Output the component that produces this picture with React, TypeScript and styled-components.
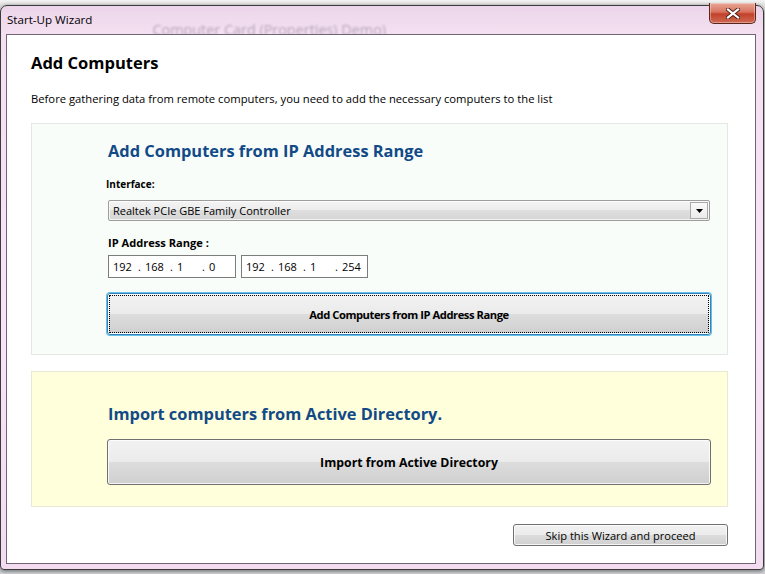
import styled, { createGlobalStyle } from "styled-components";

const GlobalStyle = createGlobalStyle`
    html, body {
        margin: 0;
        padding: 0;
    }
    body {
        background: #dfe2e6;
        font-family: "Open Sans", "Noto Sans", "Liberation Sans", sans-serif;
        color: #000;
    }
`;

const Desktop = styled.div`
    width: 765px;
    height: 574px;
    box-sizing: border-box;
    padding-top: 5px;
    overflow: hidden;
    background: linear-gradient(180deg, #f3f3f3 0px, #e4e4e4 5px, #d2d4d8 100%);
`;

const Window = styled.div`
    width: 764px;
    height: 565px;
    box-sizing: border-box;
    display: flex;
    flex-direction: column;
    padding: 0 7px 5px 5px;
    border: 1px solid #3b3b3b;
    border-radius: 7px 7px 4px 4px;
    background: linear-gradient(180deg, #ecd5ea 0px, #f4e0f1 28px, #f8e4f6 60%, #f3dcef 100%);
    box-shadow: 0 1px 4px rgba(0, 0, 0, 0.55);
`;

const TitleBar = styled.div`
    height: 28px;
    flex: none;
    display: flex;
    align-items: flex-start;
`;

const Title = styled.span`
    margin: 6px 0 0 1px;
    font-size: 11.6px;
    line-height: 15px;
`;

const GhostTitle = styled.span`
    margin: 15px 0 0 60px;
    font-size: 14.4px;
    line-height: 18px;
    color: rgba(70, 60, 80, 0.36);
    filter: blur(1.2px);
    white-space: nowrap;
`;

const CloseButton = styled.button`
    margin: -3px 0 0 auto;
    width: 47px;
    height: 21px;
    padding: 0;
    display: flex;
    align-items: center;
    justify-content: center;
    border: 1px solid #5b2419;
    border-top: none;
    border-radius: 0 0 5px 5px;
    background: linear-gradient(180deg, #e9a898 0%, #d7735f 45%, #c2412a 55%, #cf6a52 100%);
    box-shadow: inset 0 0 0 1px rgba(255, 255, 255, 0.35);
`;

const Client = styled.main`
    position: relative;
    z-index: 1;
    flex: 1;
    display: flex;
    flex-direction: column;
    border: 1px solid #6e6676;
    background: #fff;
    padding: 16px 27px 0 24px;
`;

const PageTitle = styled.h1`
    margin: 0;
    font-size: 16.5px;
    line-height: 24px;
    font-weight: 700;
`;

const Lead = styled.p`
    margin: 16px 0 0;
    font-size: 11.25px;
    line-height: 16px;
`;

const Panel = styled.section<{ $tone: "green" | "yellow" }>`
    margin-top: 16px;
    display: flex;
    flex-direction: column;
    border: 1px solid ${(p) => (p.$tone === "green" ? "#e3e8e5" : "#e8e8d4")};
    background: ${(p) => (p.$tone === "green" ? "#f8fdf9" : "#ffffdc")};
    padding: ${(p) => (p.$tone === "green" ? "16px 16px 19px 76px" : "31px 16px 21px 76px")};
`;

const PanelHeading = styled.h2`
    margin: 0;
    font-size: 16.4px;
    line-height: 22px;
    font-weight: 700;
    color: #124a88;
`;

const FieldLabel = styled.label<{ $size: number }>`
    display: block;
    font-size: ${(p) => p.$size}px;
    line-height: 15px;
    font-weight: 700;
`;

const InterfaceLabel = styled(FieldLabel)`
    margin: 15px 0 0 -2px;
`;

const RangeLabel = styled(FieldLabel)`
    margin-top: 14px;
`;

const Combo = styled.div`
    margin: 8px 1px 0 0;
    height: 21px;
    box-sizing: border-box;
    display: flex;
    align-items: center;
    border: 1px solid #9d9d9d;
    border-radius: 2px;
    background: linear-gradient(180deg, #f4f4f4 0%, #ececec 50%, #dedede 50%, #d6d6d6 100%);
    box-shadow: inset 0 0 0 1px rgba(255, 255, 255, 0.7);
`;

const ComboText = styled.span`
    flex: 1;
    padding-left: 4px;
    font-size: 11px;
    line-height: 15px;
`;

const ComboArrow = styled.span`
    width: 18px;
    height: 17px;
    margin-right: 1px;
    box-sizing: border-box;
    display: flex;
    align-items: center;
    justify-content: center;
    border: 1px solid #a9a9a9;
    background: linear-gradient(180deg, #fafafa, #ebebeb);
`;

const IpRow = styled.div`
    margin-top: 5px;
    display: flex;
    gap: 5px;
`;

const IpBox = styled.div<{ $width: number }>`
    width: ${(p) => p.$width}px;
    height: 23px;
    box-sizing: border-box;
    display: flex;
    align-items: center;
    padding-left: 4px;
    border: 1px solid #7c7c7c;
    background: #fff;
    font-size: 11px;
`;

const Octet = styled.span`
    width: 21px;
`;

const Dot = styled.span`
    width: 11px;
    text-align: center;
`;

const WinButton = styled.button<{ $focused?: boolean }>`
    display: flex;
    align-items: center;
    justify-content: center;
    box-sizing: border-box;
    padding: 0;
    font-family: inherit;
    font-size: 11.1px;
    color: #000;
    border: 1px solid ${(p) => (p.$focused ? "#3c7fb1" : "#707070")};
    border-radius: 3px;
    background: linear-gradient(180deg, #f2f2f2 0%, #ebebeb 50%, #dddddd 50%, #cfcfcf 100%);
    box-shadow: ${(p) =>
        p.$focused ? "0 0 0 1px #5fc1ef, inset 0 0 0 1px #fff" : "inset 0 0 0 1px rgba(255, 255, 255, 0.8)"};
    outline: ${(p) => (p.$focused ? "1px dotted #000" : "none")};
    outline-offset: -3px;
`;

const BigButton = styled(WinButton)<{ $height: number; $top: number; $size: number; $tight?: boolean }>`
    margin: ${(p) => p.$top}px 0 0 -1px;
    height: ${(p) => p.$height}px;
    font-size: ${(p) => p.$size}px;
    letter-spacing: ${(p) => (p.$tight ? "-0.45px" : "0")};
    font-weight: 700;
`;

const Footer = styled.div`
    margin-top: 17px;
    display: flex;
    justify-content: flex-end;
`;

const SkipButton = styled(WinButton)`
    width: 215px;
    height: 22px;
`;

function CloseGlyph() {
    return (
        <svg width="14" height="11" viewBox="0 0 14 11">
            <path d="M2 1.5 L12 9.5 M12 1.5 L2 9.5" stroke="#4a1d14" strokeWidth="4" strokeLinecap="square" />
            <path d="M2 1.5 L12 9.5 M12 1.5 L2 9.5" stroke="#fff" strokeWidth="2.2" strokeLinecap="square" />
        </svg>
    );
}

function IpAddress({ octets, width }: { octets: string[]; width: number }) {
    return (
        <IpBox $width={width}>
            {octets.map((o, i) => (
                <span key={i} style={{ display: "contents" }}>
                    <Octet>{o}</Octet>
                    {i < 3 && <Dot>.</Dot>}
                </span>
            ))}
        </IpBox>
    );
}

export default function App() {
    return (
        <Desktop>
            <GlobalStyle />
            <Window>
                <TitleBar>
                    <Title>Start-Up Wizard</Title>
                    <GhostTitle>Computer Card (Properties) Demo)</GhostTitle>
                    <CloseButton aria-label="Close">
                        <CloseGlyph />
                    </CloseButton>
                </TitleBar>
                <Client>
                    <PageTitle>Add Computers</PageTitle>
                    <Lead>
                        Before gathering data from remote computers, you need to add the necessary computers to the list
                    </Lead>

                    <Panel $tone="green">
                        <PanelHeading>Add Computers from IP Address Range</PanelHeading>
                        <InterfaceLabel $size={10}>Interface:</InterfaceLabel>
                        <Combo>
                            <ComboText>Realtek PCIe GBE Family Controller</ComboText>
                            <ComboArrow>
                                <svg width="7" height="4" viewBox="0 0 7 4">
                                    <path d="M0 0 H7 L3.5 4 Z" fill="#000" />
                                </svg>
                            </ComboArrow>
                        </Combo>
                        <RangeLabel $size={11.1}>IP Address Range :</RangeLabel>
                        <IpRow>
                            <IpAddress octets={["192", "168", "1", "0"]} width={128} />
                            <IpAddress octets={["192", "168", "1", "254"]} width={127} />
                        </IpRow>
                        <BigButton $focused $tight $height={42} $top={15} $size={11.2}>
                            Add Computers from IP Address Range
                        </BigButton>
                    </Panel>

                    <Panel $tone="yellow">
                        <PanelHeading>Import computers from Active Directory.</PanelHeading>
                        <BigButton $height={46} $top={14} $size={12.3}>
                            Import from Active Directory
                        </BigButton>
                    </Panel>

                    <Footer>
                        <SkipButton>Skip this Wizard and proceed</SkipButton>
                    </Footer>
                </Client>
            </Window>
        </Desktop>
    );
}
